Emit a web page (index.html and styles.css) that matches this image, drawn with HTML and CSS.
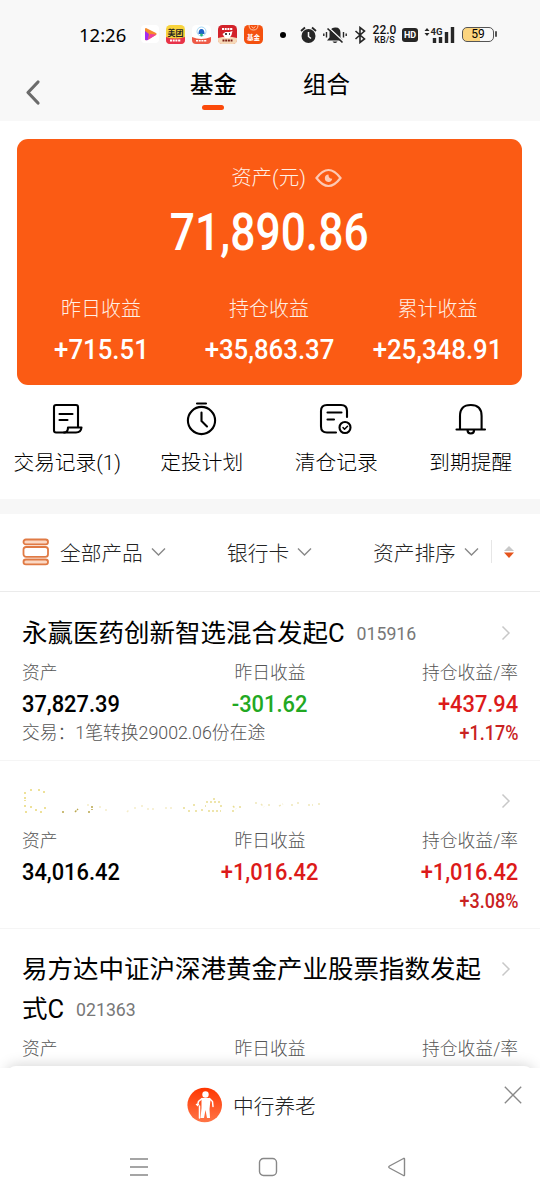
FILE: index.html
```html
<!DOCTYPE html>
<html lang="zh-CN">
<head>
<meta charset="utf-8">
<title>基金</title>
<link rel="stylesheet" href="styles.css">
</head>
<body>
<div class="phone">
  <div class="status">
    <span class="clock">12:26</span>
    <div class="apps">
      <svg width="18" height="18" viewBox="0 0 18 18"><rect width="18" height="18" rx="4" fill="#fff"/><path d="M5 3q-1 0-1 1v10q0 2 2 1l9-5q1.500-1 0-2z" fill="#f58a2c"/><path d="M4 6l4 3-1 6q-3 1-3-1z" fill="#a52bf0"/><path d="M7 15l2-6 6 .5q0 .5-1 1z" fill="#ef3e9c"/></svg>
      <svg width="19" height="19" viewBox="0 0 19 19"><rect width="19" height="19" rx="4.500" fill="#f8d33c"/><path d="M0 12q9 3 19 0v3q0 4-4 4H4q-4 0-4-4z" fill="#e8324a"/><text x="9.500" y="10.500" class="ico-lg">美团</text><path d="M4 15.500h11" stroke="#fff" stroke-width="2" stroke-dasharray="2 .7"/></svg>
      <svg width="19" height="19" viewBox="0 0 19 19"><rect width="19" height="19" rx="4.500" fill="#fff"/><path d="M0 12q9 4 19 0v3q0 4-4 4H4q-4 0-4-4z" fill="#ee5a46"/><circle cx="9.500" cy="6.500" r="4.500" fill="none" stroke="#a6d8f5"/><path d="M6.500 9q0-5 3-5t3 5z" fill="#1e62c8"/><circle cx="9.500" cy="10" r="1.400" fill="#29b77c"/><path d="M4 15.800h11" stroke="#fff" stroke-width="1.600" stroke-dasharray="2 .7"/></svg>
      <svg width="19" height="19" viewBox="0 0 19 19"><rect width="19" height="19" rx="4.500" fill="#d3222a"/><path d="M0 13q9-3 19 0v2q0 4-4 4H4q-4 0-4-4z" fill="#f6d9b8"/><path d="M4 4h11" stroke="#fff" stroke-width="2" stroke-dasharray="2 .7"/><path d="M4.500 9l3-2 4 0 3-1-1 4-2 3H7z" fill="#fff"/><path d="M7 9h2m2 0h1" stroke="#111" stroke-width="1.500"/><path d="M4.500 15.500h10" stroke="#7b2016" stroke-width="2" stroke-dasharray="2 .7"/></svg>
      <svg width="19" height="19" viewBox="0 0 19 19"><rect width="19" height="19" rx="4.500" fill="#f4510f"/><path d="M5 0q0 5 4.500 5T14 0M7.500 1.500l2 1.500 2-1.500" fill="none" stroke="#ffc6a8" stroke-width="1"/><text x="9.500" y="15" class="ico-sm">基金</text></svg>
    </div>
    <i class="dot"></i>
    <div class="signals">
      <svg width="17" height="18" viewBox="0 0 17 18"><circle cx="8.500" cy="10" r="7" fill="#262626"/><path d="M1 5l4-3.500M16 5l-4-3.500" stroke="#262626" stroke-width="1.800"/><path d="M8.500 6v4.500l2.500 2" stroke="#f8f8f8" stroke-width="1.500" fill="none"/></svg>
      <svg width="24" height="18" viewBox="0 0 24 18"><path d="M4 14.500l2.500-3V7q0-5 5.500-5.500t5.500 5.500v4.500l2.500 3z" fill="#262626"/><path d="M9.500 15.500h5q-2.500 3-5 0z" fill="#262626"/><path d="M5.500 1.500l15 14" stroke="#f8f8f8" stroke-width="1.500"/><path d="M4.500 2.500l15 14" stroke="#262626" stroke-width="1.600"/><path d="M.8 7.500v2.500M3.500 6v5.500M20.500 6v5.500M23.200 7.500v2.500" stroke="#262626" stroke-width="1.400"/></svg>
      <svg class="bt" width="12" height="18" viewBox="0 0 12 18"><path d="M1.500 5l9 8L6 16.500V1.500L10.500 5l-9 8" fill="none" stroke="#262626" stroke-width="1.600"/></svg>
      <div class="speed"><b>22.0</b><span>KB/S</span></div>
      <span class="hd">HD</span>
      <svg class="sig" width="31" height="18" viewBox="0 0 31 18"><path d="M.5 5l2.500-3 2.500 3zM.5 7h5L3 10z" fill="#262626"/><text x="6.500" y="9" class="g4">4G</text><path d="M10.500 12v5M16.500 11v6M22.500 6v11M28.500 1v16" stroke="#262626" stroke-width="3.400"/></svg>
      <span class="battery"><em>59</em></span>
    </div>
  </div>

  <header class="nav">
    <svg class="back" width="16" height="28" viewBox="0 0 16 28"><path d="M13 3L3 13.500 13 24" fill="none" stroke="#6b6b6b" stroke-width="3.200" stroke-linecap="round" stroke-linejoin="round"/></svg>
    <div class="tab tab-on">基金</div>
    <div class="tab">组合</div>
  </header>

  <section class="card">
    <div class="card-label">资产(元)
      <svg width="27" height="20" viewBox="0 0 27 20"><path d="M1.500 10Q13.500-6 25.500 10 13.500 26 1.500 10z" fill="none" stroke="#fdc9b4" stroke-width="2.200"/><path d="M13.500 6.500a3.700 3.700 0 1 0 3.700 4.300q-3.700 0-3.700-4.300z" fill="#fdc9b4"/></svg>
    </div>
    <div class="total num">71,890.86</div>
    <div class="gains">
      <div><span>昨日收益</span><b class="num">+715.51</b></div>
      <div><span>持仓收益</span><b class="num">+35,863.37</b></div>
      <div><span>累计收益</span><b class="num">+25,348.91</b></div>
    </div>
  </section>

  <section class="actions">
    <div><svg width="34" height="36" viewBox="0 0 34 36"><g class="ln"><path d="M15 31.500H6q-2 0-2-2V6q0-2 2-2h20q2 0 2 2v20"/><path d="M14 31.500h12q5 0 5.500-5H18q0 5-4 5zM9.500 13h13M9.500 19h8"/></g></svg><span>交易记录(1)</span></div>
    <div><svg width="34" height="36" viewBox="0 0 34 36"><g class="ln"><circle cx="16.500" cy="19.500" r="13.600"/><path d="M12 2.500h9M16.500 11.500v8.500l5.500 5.500"/></g></svg><span>定投计划</span></div>
    <div><svg width="34" height="36" viewBox="0 0 34 36"><g class="ln"><path d="M17 31.500H8q-6 0-6-6V10q0-6 6-6h14q6 0 6 6v6M8.500 11.500h14M8.500 18.500h6.500"/><circle cx="26" cy="26.500" r="5.500"/><path d="M24 26.500l1.500 1.700 3-3" stroke-width="1.500"/></g></svg><span>清仓记录</span></div>
    <div><svg width="34" height="36" viewBox="0 0 34 36"><g class="ln"><path d="M6 27.500V15q0-11 10.800-11t10.800 11v12.500M2.500 28.500h28.500M13.500 29q0 3.500 3.300 3.500t3.300-3.500"/></g></svg><span>到期提醒</span></div>
  </section>

  <section class="filters">
    <svg class="stack" width="28" height="28" viewBox="0 0 28 28"><g fill="#fbd9c5" stroke="#e07a44" stroke-width="1.800"><rect x="1.500" y="1.500" width="24.500" height="4.800" rx="2.400"/><rect x="1.500" y="21.500" width="24.500" height="4.800" rx="2.400"/><rect x="1.500" y="9" width="24.500" height="9.800" rx="2.600" fill="#fff"/></g></svg>
    <span class="f1">全部产品</span><svg class="chev" width="15" height="10" viewBox="0 0 15 10"><path d="M1 1.500l6.500 6.500L14 1.500"/></svg>
    <span class="f2">银行卡</span><svg class="chev" width="15" height="10" viewBox="0 0 15 10"><path d="M1 1.500l6.500 6.500L14 1.500"/></svg>
    <span class="f3">资产排序</span><svg class="chev" width="15" height="10" viewBox="0 0 15 10"><path d="M1 1.500l6.500 6.500L14 1.500"/></svg>
    <i class="rule"></i>
    <svg class="sort" width="12" height="14" viewBox="0 0 12 14"><path d="M1 6l5-5 5 5z" fill="#c8c8c8"/><path d="M1 7.500h10l-5 5.500z" fill="#e5541c"/></svg>
  </section>

  <main class="list">
    <article class="fund">
      <div class="head"><h2>永赢医药创新智选混合发起C<small>015916</small></h2><svg class="go" width="10" height="16" viewBox="0 0 10 16"><path d="M1.500 1.500L8 8l-6.500 6.500"/></svg></div>
      <div class="row labels"><span>资产</span><span>昨日收益</span><span>持仓收益/率</span></div>
      <div class="row values"><b class="num">37,827.39</b><b class="num down">-301.62</b><b class="num up">+437.94</b></div>
      <div class="foot"><span>交易：1笔转换29002.06份在途</span><b class="num up">+1.17%</b></div>
    </article>
    <article class="fund">
      <div class="head">
        <svg class="masked" width="300" height="30" viewBox="0 0 300 30">
          <g fill="none" stroke-width="1.500">
            <path d="M2 6h3m3-3h2m6 0h2m3 2h2M3 10v4m0 4v2M3 25h2m3-5h2m4 2v3m4 0h2m2-4h2" stroke="#e9d878" stroke-dasharray="2 1"/>
            <path d="M53 25l3-3m-16 3h2m28-6v4m-3 1v2" stroke="#b9a64c" stroke-dasharray="2 1"/>
            <path d="M66 17v2m11 1h2m4 3h2m20 2l3-3m4-1h3m4-2h3m3 3h10m8-1h8" stroke="#f5edc9" stroke-dasharray="2 3"/>
            <path d="M161 21h3m2 3h3m2-6h3m-1 6h2m5-2v3m4-10h15m-16 4h1m14 0h2m-14 5h13m-7-13v3m19 5l3 3m4-3v4m-8 1h3" stroke="#e9dd91" stroke-dasharray="2 2"/>
            <path d="M234 15v3m5-1l3 3m4-2h4m7 1l4-2m8 1h3m3-2h4m7 2h5m5-1h3" stroke="#f0e7b9" stroke-dasharray="2 2"/>
          </g>
        </svg>
        <svg class="go" width="10" height="16" viewBox="0 0 10 16"><path d="M1.500 1.500L8 8l-6.500 6.500"/></svg></div>
      <div class="row labels"><span>资产</span><span>昨日收益</span><span>持仓收益/率</span></div>
      <div class="row values"><b class="num">34,016.42</b><b class="num up">+1,016.42</b><b class="num up">+1,016.42</b></div>
      <div class="foot"><span></span><b class="num up">+3.08%</b></div>
    </article>
    <article class="fund">
      <div class="head"><h2>易方达中证沪深港黄金产业股票指数发起<br>式C<small>021363</small></h2><svg class="go" width="10" height="16" viewBox="0 0 10 16"><path d="M1.500 1.500L8 8l-6.500 6.500"/></svg></div>
      <div class="row labels"><span>资产</span><span>昨日收益</span><span>持仓收益/率</span></div>
    </article>
  </main>

  <footer class="sheet">
    <div class="promo">
      <svg width="36" height="36" viewBox="0 0 36 36"><defs><linearGradient id="g" x2="0" y2="1"><stop offset="0" stop-color="#ff3600"/><stop offset="1" stop-color="#ff7547"/></linearGradient></defs><circle cx="17.700" cy="18" r="17.300" fill="url(#g)"/><circle cx="18.500" cy="7.500" r="3.200" fill="#fff"/><path d="M14.500 11h8l1 2-1 9 .5 9h-3l-1.500-8-1.500 8h-3.500l1-10z" fill="#fff"/><path d="M15 11.500l-3.500 3-1 4M22.500 11.500l3 3 .5 5M11.500 17.500H9.500M12.500 19v12" fill="none" stroke="#fff" stroke-width="1.500" stroke-linecap="round"/></svg>
      <span>中行养老</span>
    </div>
    <svg class="close" width="18" height="18" viewBox="0 0 18 18"><path d="M.8.8l16.400 16.400M17.200.8L.8 17.200" stroke="#888" stroke-width="1.300"/></svg>
    <div class="system">
      <svg width="20" height="20" viewBox="0 0 20 20"><path d="M1 2h18M1 10h18M1 18h18"/></svg>
      <svg width="20" height="20" viewBox="0 0 20 20"><rect x="1.500" y="1.500" width="17" height="17" rx="4"/></svg>
      <svg width="20" height="20" viewBox="0 0 20 20"><path d="M17.500 2v16q0 1-1 .5l-14-7.500q-1.500-1 0-2l14-7.500q1-.5 1 .5z"/></svg>
    </div>
  </footer>
</div>
</body>
</html>
```
FILE: styles.css
```css
* { box-sizing: border-box; }
body { margin: 0; background: #fff; font-family: Roboto, "Noto Sans CJK SC", sans-serif; color: #000; }
svg { display: block; flex: none; }
.phone { width: 540px; height: 1200px; display: flex; flex-direction: column; overflow: hidden; }

.status { height: 55px; flex: none; background: #f8f8f8; display: flex; align-items: center; padding: 14px 0 0 79px; }
.clock { width: 62px; font: 400 18.500px/24px "Noto Sans", sans-serif; }
.apps { display: flex; gap: 7px; }
.ico-lg { font: 700 8px "Noto Sans CJK SC", sans-serif; text-anchor: middle; fill: #222; }
.ico-sm { font: 700 6.500px "Noto Sans CJK SC", sans-serif; text-anchor: middle; fill: #fff; }
.dot { width: 6px; height: 6px; border-radius: 50%; background: #000; margin-left: 17px; }
.signals { display: flex; align-items: center; margin-left: 14px; }
.signals > :nth-child(2) { margin-left: 6px; }
.bt { margin-left: 7px; }
.speed { display: flex; flex-direction: column; align-items: center; width: 25px; margin-left: 6px; color: #111; }
.speed b { font: 500 12px/12px Roboto, sans-serif; }
.speed span { font: 500 9px/9px Roboto, sans-serif; }
.hd { width: 16px; height: 14px; margin-left: 5px; border-radius: 3px; background: #262626; color: #fff; font: 700 9px/14px Roboto, sans-serif; text-align: center; }
.sig { margin-left: 6px; }
.g4 { font: 700 9.500px Roboto, sans-serif; fill: #262626; }
.battery { position: relative; width: 32px; height: 15px; margin-left: 7px; border: 1.500px solid #555; border-radius: 5px; background: linear-gradient(90deg, #fbd47e 57%, #f8f8f8 57%); text-align: center; }
.battery::after { content: ""; position: absolute; right: -4px; top: 3px; width: 2px; height: 6px; background: #555; border-radius: 1px; }
.battery em { display: block; font: normal 400 12px/13px Roboto, sans-serif; }

.nav { height: 66px; flex: none; display: flex; align-items: flex-start; background: #f8f8f8; padding-left: 25px; }
.back { margin-top: 24px; }
.tab { width: 48px; font-size: 23.500px; line-height: 36px; margin: 12px 0 0 65px; white-space: nowrap; }
.tab-on { margin-left: 149px; font-weight: 500; }
.tab-on::after { content: ""; display: block; width: 22px; height: 5px; margin: 2px 0 0 12px; border-radius: 3px; background: #fb4a0b; }

.num { display: inline-block; font-family: Roboto, sans-serif; font-weight: 500; white-space: nowrap; }
.card { height: 246px; flex: none; margin: 18px 18px 0 17px; border-radius: 11px; background: #fb5b14; color: #fff; display: flex; flex-direction: column; align-items: center; padding-top: 23px; }
.card-label { display: flex; align-items: center; gap: 9px; padding-left: 34px; font-size: 20.500px; line-height: 32px; color: #fff0e6; font-weight: 300; }
.total { font-size: 51px; line-height: 60px; margin-top: 9px; transform: scaleX(.87); }
.gains { width: 505px; margin-top: 30px; display: grid; grid-template-columns: 168px 168px 169px; text-align: center; }
.gains div { display: flex; flex-direction: column; align-items: center; }
.gains span { font-size: 20px; line-height: 32px; color: #fff0e6; font-weight: 300; }
.gains b { font-size: 28px; line-height: 32px; margin-top: 9px; transform: scaleX(.92); }

.actions { height: 114px; flex: none; display: grid; grid-template-columns: repeat(4, 134.500px); padding-top: 16px; }
.actions div { display: flex; flex-direction: column; align-items: center; }
.actions span { font-size: 20.700px; line-height: 32px; margin-top: 10px; white-space: nowrap; font-weight: 300; }
.ln { fill: none; stroke: #000; stroke-width: 2.100; stroke-linecap: round; stroke-linejoin: round; }

.filters { height: 93px; flex: none; display: flex; align-items: center; padding: 0 0 2px 22px; border-top: 15px solid #f7f7f7; border-bottom: 1px solid #ebebeb; font-size: 20.700px; font-weight: 300; color: #222; white-space: nowrap; }
.f1 { width: 83px; margin-left: 10px; }
.f2 { width: 62px; margin-left: 61px; }
.f3 { width: 83px; margin-left: 61px; }
.chev { margin-left: 8px; fill: none; stroke: #888; stroke-width: 1.400; }
.rule { width: 1px; height: 23px; background: #e6e6e6; margin-left: 12px; }
.sort { margin-left: 11px; }

.list { flex: 1; min-height: 0; overflow: hidden; }
.fund { height: 168.500px; padding: 20px 22px 0; border-bottom: 1px solid #f5f5f5; }
.fund:first-child { padding-top: 21px; }
.head { display: flex; justify-content: space-between; min-height: 40px; }
.fund:first-child .head { height: 40px; }
.fund:last-child .head { height: 80px; }
h2 { margin: 0; font-weight: 400; font-size: 25.500px; line-height: 40px; white-space: nowrap; }
small { font-size: 17.700px; line-height: 1; color: #777; margin-left: 12px; vertical-align: 2px; }
.go { margin: 12px 7px 0 0; fill: none; stroke: #c8c8c8; stroke-width: 1.500; }
.masked { margin-top: 6px; }
.row { display: grid; grid-template-columns: 160px 176px 160px; }
.row > :nth-child(1) { justify-self: start; }
.row > :nth-child(2) { justify-self: center; }
.row > :nth-child(3) { justify-self: end; }
.labels { font-size: 17.800px; line-height: 40px; color: #555; font-weight: 300; }
.values { font-size: 24px; line-height: 22px; }
.values .num { transform: scaleX(.91); transform-origin: 0 50%; }
.values .num:nth-child(2) { transform-origin: 50% 50%; }
.values .num:nth-child(3) { transform-origin: 100% 50%; }
.up { color: #dc1a1a; }
.down { color: #22a822; }
.foot { display: flex; justify-content: space-between; font-size: 17.800px; line-height: 36px; color: #555; font-weight: 300; }
.foot .num { font-size: 20px; transform: scaleX(.9); transform-origin: 100% 50%; }
.foot .up { color: #c92222; }

.sheet { position: relative; height: 134px; flex: none; background: #fff; }
.sheet::before { content: ""; position: absolute; left: 6px; right: 6px; top: 0; height: 40px; border-radius: 10px 10px 0 0; background: #fff; box-shadow: 0 -1px 14px rgba(0, 0, 0, .17); clip-path: inset(-20px -6px 38px -6px); }
.promo { position: relative; display: flex; align-items: center; gap: 10px; height: 77px; padding-left: 187px; font-size: 20.700px; font-weight: 300; color: #222; }
.close { position: absolute; right: 18px; top: 20px; }
.system { display: flex; gap: 109px; padding: 14px 0 0 129px; fill: none; stroke: #888; stroke-width: 1.400; }
.system svg { fill: none; }
```
